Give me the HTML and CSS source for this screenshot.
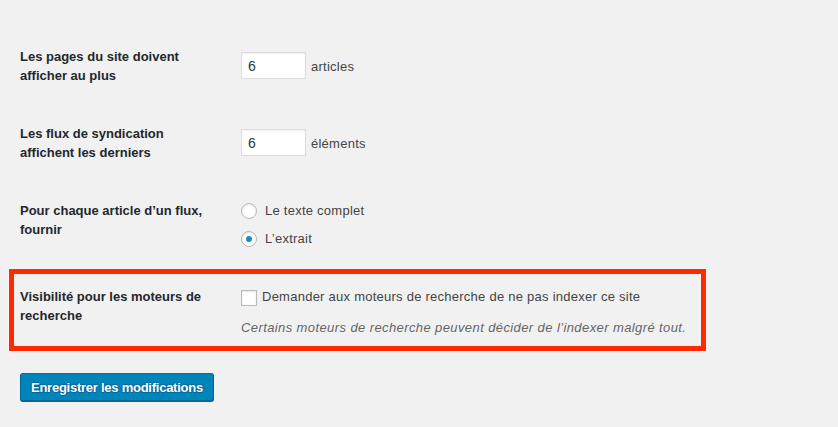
FILE: index.html
```html
<!DOCTYPE html>
<html lang="fr">
<head>
    <meta charset="UTF-8">
    <meta name="viewport" content="width=device-width, initial-scale=1.0">
    <title>Réglages de lecture</title>
    <link rel="stylesheet" href="styles.css">
</head>
<body>

<form class="settings">
    <div class="row">
        <label class="row-label" for="posts_per_page">Les pages du site doivent afficher au plus</label>
        <div class="row-field">
            <div class="inline">
                <input class="small-text" type="text" id="posts_per_page" value="6">
                <span>articles</span>
            </div>
        </div>
    </div>

    <div class="row">
        <label class="row-label" for="posts_per_rss">Les flux de syndication affichent les derniers</label>
        <div class="row-field">
            <div class="inline">
                <input class="small-text" type="text" id="posts_per_rss" value="6">
                <span>éléments</span>
            </div>
        </div>
    </div>

    <div class="row row-radios">
        <div class="row-label">Pour chaque article d’un flux, fournir</div>
        <div class="row-field">
            <label class="option">
                <input type="radio" name="rss_use_excerpt" value="0">
                <span>Le texte complet</span>
            </label>
            <label class="option">
                <input type="radio" name="rss_use_excerpt" value="1" checked>
                <span>L’extrait</span>
            </label>
        </div>
    </div>

    <div class="row highlight">
        <div class="row-label">Visibilité pour les moteurs de recherche</div>
        <div class="row-field">
            <label class="option check">
                <input type="checkbox" name="blog_public" value="0">
                <span>Demander aux moteurs de recherche de ne pas indexer ce site</span>
            </label>
            <p class="description">Certains moteurs de recherche peuvent décider de l’indexer malgré tout.</p>
        </div>
    </div>

    <p class="submit">
        <button type="button" class="button-primary">Enregistrer les modifications</button>
    </p>
</form>

</body>
</html>
```

FILE: styles.css
```css
body {
    margin: 0;
    background: #f1f1f1;
    font-family: "Liberation Sans", Arial, sans-serif;
    font-size: 13px;
    color: #444;
    width: 838px;
    height: 427px;
    overflow: hidden;
}
.settings {
    padding: 28px 0 0 20px;
}
.row {
    display: flex;
    align-items: flex-start;
    padding: 19px 0 20px;
}
.row-radios {
    padding-bottom: 21px;
}
.row-label {
    width: 221px;
    flex: none;
    font-weight: bold;
    line-height: 19px;
    color: #23282d;
    padding-right: 21px;
    box-sizing: border-box;
}
.row-field {
    line-height: 19px;
    letter-spacing: 0.25px;
}
.inline {
    display: flex;
    align-items: baseline;
    gap: 5px;
    margin-top: 5px;
}
.small-text {
    width: 65px;
    height: 27px;
    box-sizing: border-box;
    padding: 0 6px;
    border: 1px solid #ddd;
    background: #fff;
    box-shadow: inset 0 1px 2px rgba(0, 0, 0, 0.07);
    font-family: "Liberation Sans", Arial, sans-serif;
    font-size: 14px;
    color: #32373c;
    outline: none;
    margin: 0;
}
.option {
    display: flex;
    align-items: center;
    gap: 8px;
    height: 19px;
}
.option + .option {
    margin-top: 9px;
}
.option input {
    appearance: none;
    -webkit-appearance: none;
    width: 16px;
    height: 16px;
    margin: 0;
    flex: none;
    border: 1px solid #b4b9be;
    background: #fff;
    box-shadow: inset 0 1px 2px rgba(0, 0, 0, 0.1);
    box-sizing: border-box;
    display: flex;
    align-items: center;
    justify-content: center;
}
.option input[type="radio"] {
    border-radius: 50%;
}
.option input[type="radio"]:checked::before {
    content: "";
    width: 6px;
    height: 6px;
    border-radius: 50%;
    background: #1e8cbe;
}
.check {
    gap: 5px;
}
.check input {
    margin-top: 2px;
}
.description {
    margin: 12px 0 0;
    font-style: italic;
    letter-spacing: 0.4px;
    color: #666;
}
.highlight {
    width: 697px;
    box-sizing: border-box;
    margin-left: -11px;
    border: 5px solid #ff2a00;
    padding: 13px 0 9px 6px;
    box-shadow: 0 0 0 1px rgba(255, 255, 255, 0.45);
}
.submit {
    margin: 22px 0 0;
    padding: 0;
}
.button-primary {
    height: 28px;
    padding: 0 10px;
    border: 1px solid #006799;
    border-color: #0073aa #006799 #006799;
    border-radius: 3px;
    background: #0085ba;
    box-shadow: 0 1px 0 #006799;
    color: #fff;
    font-family: "Liberation Sans", Arial, sans-serif;
    font-size: 13px;
    font-weight: bold;
    letter-spacing: -0.25px;
    text-shadow: 0 -1px 1px #006799, 1px 0 1px #006799, 0 1px 1px #006799, -1px 0 1px #006799;
    cursor: pointer;
}
```
